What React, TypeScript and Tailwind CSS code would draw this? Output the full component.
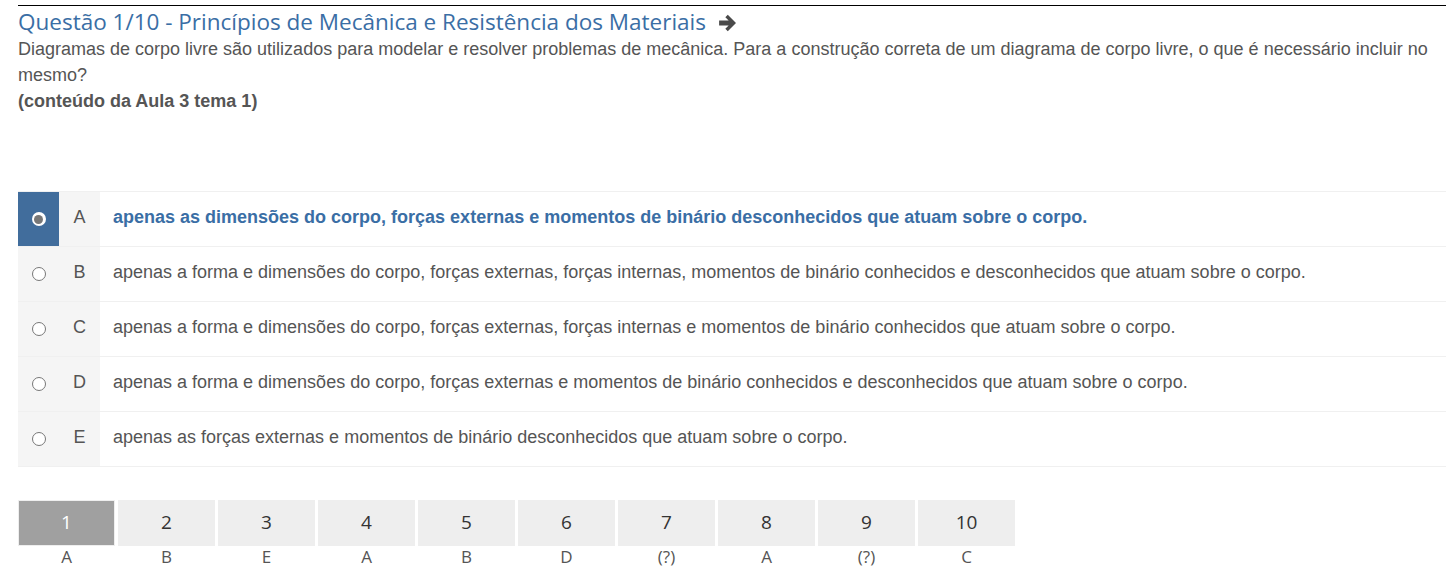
import React from "react";

const options = [
  { l: "A", t: "apenas as dimensões do corpo, forças externas e momentos de binário desconhecidos que atuam sobre o corpo.", sel: true },
  { l: "B", t: "apenas a forma e dimensões do corpo, forças externas, forças internas, momentos de binário conhecidos e desconhecidos que atuam sobre o corpo." },
  { l: "C", t: "apenas a forma e dimensões do corpo, forças externas, forças internas e momentos de binário conhecidos que atuam sobre o corpo." },
  { l: "D", t: "apenas a forma e dimensões do corpo, forças externas e momentos de binário conhecidos e desconhecidos que atuam sobre o corpo." },
  { l: "E", t: "apenas as forças externas e momentos de binário desconhecidos que atuam sobre o corpo." },
];

const nav = [
  ["1", "A"], ["2", "B"], ["3", "E"], ["4", "A"], ["5", "B"],
  ["6", "D"], ["7", "(?)"], ["8", "A"], ["9", "(?)"], ["10", "C"],
];

export default function App() {
  return (
    <div className="w-[1446px] h-[582px] bg-white overflow-hidden pl-[18px] pt-[5px]" style={{ fontFamily: '"Liberation Sans", Arial, sans-serif' }}>
      <div className="border-t-[1.5px] border-black" />
      <h3 className="text-[22.5px] leading-[30px] text-[#3a6ea5] flex items-center gap-[12px] mt-[1px]" style={{ fontFamily: '"Open Sans", sans-serif' }}>
        <span>Questão 1/10 - Princípios de Mecânica e Resistência dos Materiais</span>
        <svg width="20" height="18" viewBox="0 0 18 16" className="mt-[2px]">
          <path d="M1 5.8 H9.6 L6.6 2.8 L8.8 0.6 L16.2 8 L8.8 15.4 L6.6 13.2 L9.6 10.2 H1 Z" fill="#4a4a4a" />
        </svg>
      </h3>
      <p className="text-[18px] leading-[26px] text-[#555] pr-[10px] mt-[-1px]">
        Diagramas de corpo livre são utilizados para modelar e resolver problemas de mecânica. Para a construção correta de um diagrama de corpo livre, o que é necessário incluir no mesmo?
      </p>
      <p className="text-[18px] leading-[26px] text-[#555] font-bold">(conteúdo da Aula 3 tema 1)</p>

      <div className="mt-[77px] border-t border-[#f0f0f0]">
        {options.map((o) => (
          <div key={o.l} className="flex h-[55px] border-b border-[#f0f0f0]">
            <div className={`w-[41px] flex items-center justify-center ${o.sel ? "bg-[#416d9c]" : "bg-[#f5f5f5]"}`}>
              {o.sel ? (
                <span className="w-[14px] h-[14px] rounded-full bg-white flex items-center justify-center">
                  <span className="w-[9px] h-[9px] rounded-full bg-[#777]" />
                </span>
              ) : (
                <span className="w-[14px] h-[14px] rounded-full border border-[#777] bg-white" />
              )}
            </div>
            <div className="w-[41px] bg-[#f5f5f5] flex items-center justify-center pb-[3px] text-[18px] text-[#555]">{o.l}</div>
            <div className={`flex-1 flex items-center pl-[13px] pb-[3px] text-[18px] ${o.sel ? "text-[#3a6ea5] font-bold" : "text-[#555]"}`}>
              {o.t}
            </div>
          </div>
        ))}
      </div>

      <div className="flex gap-[3px] mt-[33px]" style={{ fontFamily: '"Open Sans", sans-serif' }}>
        {nav.map(([n, a], i) => (
          <div key={n} className="w-[97px] flex flex-col items-center">
            <div className={`w-full h-[46px] flex items-center justify-center pb-[2px] text-[19px] ${i === 0 ? "bg-[#a0a0a0] text-white border border-[#eee]" : "bg-[#eeeeee] text-[#333]"}`}>
              {n}
            </div>
            <div className="text-[17px] leading-[22px] text-[#555]">{a}</div>
          </div>
        ))}
      </div>
    </div>
  );
}
